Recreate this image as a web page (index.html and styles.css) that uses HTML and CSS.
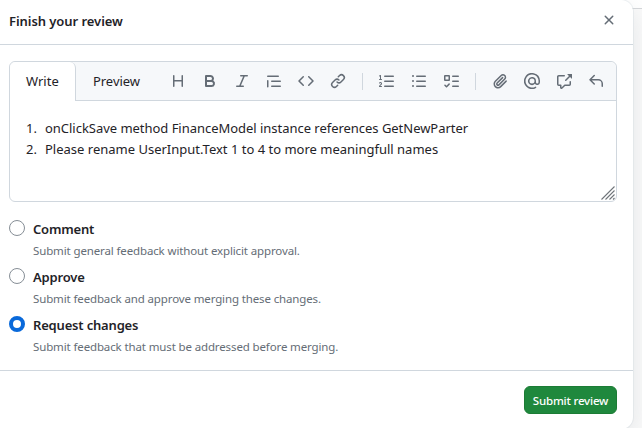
FILE: index.html
```html
<!DOCTYPE html>
<html lang="en">
<head>
<meta charset="utf-8">
<title>Finish your review</title>
<link rel="stylesheet" href="styles.css">
</head>
<body>
<div class="page-line"></div>
<form class="dialog">
  <header class="dialog-header">
    <h1 class="title"><span>Finish your review</span></h1>
    <button type="button" class="icon-btn close" aria-label="Close"><svg viewBox="0 0 16 16"><path d="M3.72 3.72a.75.75 0 0 1 1.06 0L8 6.94l3.22-3.22a.75.75 0 0 1 1.06 1.06L9.06 8l3.22 3.22a.75.75 0 0 1-1.06 1.06L8 9.06l-3.22 3.22a.75.75 0 0 1-1.06-1.06L6.94 8 3.72 4.78a.75.75 0 0 1 0-1.06Z"/></svg></button>
  </header>
  <section class="dialog-body">
    <div class="editor">
      <div class="tabs">
        <button type="button" class="tab active"><span>Write</span></button>
        <button type="button" class="tab preview"><span>Preview</span></button>
        <div class="toolbar">
          <button type="button" class="icon-btn" aria-label="Heading"><svg viewBox="0 0 16 16"><path d="M3.75 2a.75.75 0 0 1 .75.75V7h7V2.75a.75.75 0 0 1 1.5 0v10.5a.75.75 0 0 1-1.5 0V8.5h-7v4.75a.75.75 0 0 1-1.5 0V2.75A.75.75 0 0 1 3.75 2Z"/></svg></button>
          <button type="button" class="icon-btn" aria-label="Bold"><svg viewBox="0 0 16 16"><path d="M4 2h4.5a3.501 3.501 0 0 1 2.852 5.53A3.499 3.499 0 0 1 9.5 14H4a1 1 0 0 1-1-1V3a1 1 0 0 1 1-1Zm1 7v3h4.5a1.5 1.5 0 0 0 0-3Zm3.5-2a1.5 1.5 0 0 0 0-3H5v3Z"/></svg></button>
          <button type="button" class="icon-btn" aria-label="Italic"><svg viewBox="0 0 16 16"><path d="M6 2.75A.75.75 0 0 1 6.75 2h6.5a.75.75 0 0 1 0 1.5h-2.505l-3.858 9H9.25a.75.75 0 0 1 0 1.5h-6.5a.75.75 0 0 1 0-1.5h2.505l3.858-9H6.75A.75.75 0 0 1 6 2.75Z"/></svg></button>
          <button type="button" class="icon-btn" aria-label="Quote"><svg viewBox="0 0 16 16"><path d="M1.75 2.5h10.5a.75.75 0 0 1 0 1.5H1.75a.75.75 0 0 1 0-1.5Zm4 5h8.5a.75.75 0 0 1 0 1.5h-8.5a.75.75 0 0 1 0-1.5Zm0 5h8.5a.75.75 0 0 1 0 1.5h-8.5a.75.75 0 0 1 0-1.5ZM2.5 7.75v6a.75.75 0 0 1-1.5 0v-6a.75.75 0 0 1 1.5 0Z"/></svg></button>
          <button type="button" class="icon-btn" aria-label="Code"><svg viewBox="0 0 16 16"><path d="m11.28 3.22 4.25 4.25a.75.75 0 0 1 0 1.06l-4.25 4.25a.749.749 0 0 1-1.275-.326.749.749 0 0 1 .215-.734L13.94 8l-3.72-3.72a.749.749 0 0 1 .326-1.275.749.749 0 0 1 .734.215Zm-6.56 0a.751.751 0 0 1 1.042.018.751.751 0 0 1 .018 1.042L2.06 8l3.72 3.72a.749.749 0 0 1-.326 1.275.749.749 0 0 1-.734-.215L.47 8.53a.75.75 0 0 1 0-1.06Z"/></svg></button>
          <button type="button" class="icon-btn" aria-label="Link"><svg viewBox="0 0 16 16"><path d="m7.775 3.275 1.25-1.25a3.5 3.5 0 1 1 4.95 4.95l-2.5 2.5a3.5 3.5 0 0 1-4.95 0 .751.751 0 0 1 .018-1.042.751.751 0 0 1 1.042-.018 1.998 1.998 0 0 0 2.83 0l2.5-2.5a2.002 2.002 0 0 0-2.83-2.83l-1.25 1.25a.751.751 0 0 1-1.042-.018.751.751 0 0 1-.018-1.042Zm-4.69 9.64a1.998 1.998 0 0 0 2.83 0l1.25-1.25a.751.751 0 0 1 1.042.018.751.751 0 0 1 .018 1.042l-1.25 1.25a3.5 3.5 0 1 1-4.95-4.95l2.5-2.5a3.5 3.5 0 0 1 4.95 0 .751.751 0 0 1-.018 1.042.751.751 0 0 1-1.042.018 1.998 1.998 0 0 0-2.83 0l-2.5 2.5a1.998 1.998 0 0 0 0 2.83Z"/></svg></button>
          <i class="divider"></i>
          <button type="button" class="icon-btn" aria-label="Numbered list"><svg viewBox="0 0 16 16"><path d="M5.75 2.5h8.5a.75.75 0 0 1 0 1.5h-8.5a.75.75 0 0 1 0-1.5Zm0 5h8.5a.75.75 0 0 1 0 1.5h-8.5a.75.75 0 0 1 0-1.5Zm0 5h8.5a.75.75 0 0 1 0 1.5h-8.5a.75.75 0 0 1 0-1.5ZM.924 10.32a.5.5 0 0 1-.851-.525l.01-.018c.097-.144.215-.273.348-.384.228-.19.588-.392 1.068-.392.468 0 .858.181 1.126.484.259.294.377.673.377 1.038 0 .987-.686 1.495-1.156 1.845l-.047.035c-.303.225-.522.4-.654.597h1.357a.5.5 0 0 1 0 1H.5a.5.5 0 0 1-.5-.5c0-1.005.692-1.52 1.167-1.875l.035-.025c.531-.396.8-.625.8-1.078a.57.57 0 0 0-.128-.376C1.806 10.068 1.695 10 1.5 10a.658.658 0 0 0-.429.163.835.835 0 0 0-.144.153ZM2.003 2.5V6h.503a.5.5 0 0 1 0 1H.5a.5.5 0 0 1 0-1h.503V3.308l-.28.14a.5.5 0 0 1-.446-.895l1.003-.5a.5.5 0 0 1 .723.447Z"/></svg></button>
          <button type="button" class="icon-btn" aria-label="Bulleted list"><svg viewBox="0 0 16 16"><path d="M5.75 2.5h8.5a.75.75 0 0 1 0 1.5h-8.5a.75.75 0 0 1 0-1.5Zm0 5h8.5a.75.75 0 0 1 0 1.5h-8.5a.75.75 0 0 1 0-1.5Zm0 5h8.5a.75.75 0 0 1 0 1.5h-8.5a.75.75 0 0 1 0-1.5ZM2 14a1 1 0 1 1 0-2 1 1 0 0 1 0 2Zm1-6a1 1 0 1 1-2 0 1 1 0 0 1 2 0ZM2 4a1 1 0 1 1 0-2 1 1 0 0 1 0 2Z"/></svg></button>
          <button type="button" class="icon-btn" aria-label="Task list"><svg viewBox="0 0 16 16"><path d="M2 2h4a1 1 0 0 1 1 1v4a1 1 0 0 1-1 1H2a1 1 0 0 1-1-1V3a1 1 0 0 1 1-1Zm4.655 8.595a.75.75 0 0 1 0 1.06L4.03 14.28a.75.75 0 0 1-1.06 0l-1.5-1.5a.749.749 0 0 1 .326-1.275.749.749 0 0 1 .734.215l.97.97 2.095-2.095a.75.75 0 0 1 1.06 0ZM9.75 2.5h5.5a.75.75 0 0 1 0 1.5h-5.5a.75.75 0 0 1 0-1.5Zm0 5h5.5a.75.75 0 0 1 0 1.5h-5.5a.75.75 0 0 1 0-1.5Zm0 5h5.5a.75.75 0 0 1 0 1.5h-5.5a.75.75 0 0 1 0-1.5Zm-7.25-9v3h3v-3Z"/></svg></button>
          <i class="divider"></i>
          <button type="button" class="icon-btn" aria-label="Attach files"><svg viewBox="0 0 16 16"><path d="M12.212 3.02a1.753 1.753 0 0 0-2.478.003l-5.83 5.83a3.007 3.007 0 0 0-.88 2.127c0 .795.315 1.551.88 2.116.567.567 1.333.89 2.126.89.79 0 1.548-.321 2.116-.89l5.48-5.48a.75.75 0 0 1 1.061 1.06l-5.48 5.48a4.492 4.492 0 0 1-3.177 1.33c-1.2 0-2.345-.487-3.187-1.33a4.483 4.483 0 0 1-1.32-3.177c0-1.195.475-2.341 1.32-3.186l5.83-5.83a3.25 3.25 0 0 1 5.553 2.297c0 .863-.343 1.691-.953 2.301L7.439 12.39c-.375.377-.884.59-1.416.593a1.998 1.998 0 0 1-1.412-.593 1.992 1.992 0 0 1 0-2.828l5.48-5.48a.751.751 0 0 1 1.042.018.751.751 0 0 1 .018 1.042l-5.48 5.48a.492.492 0 0 0 0 .707.499.499 0 0 0 .352.154.51.51 0 0 0 .356-.154l5.833-5.827a1.755 1.755 0 0 0 0-2.481Z"/></svg></button>
          <button type="button" class="icon-btn" aria-label="Mention"><svg viewBox="0 0 16 16"><path d="M4.75 2.37a6.501 6.501 0 0 0 6.5 11.26.75.75 0 0 1 .75 1.298A7.999 7.999 0 0 1 .989 4.148 8 8 0 0 1 16 7.75v1.5a2.75 2.75 0 0 1-5.072 1.475 3.999 3.999 0 0 1-6.65-4.19A4 4 0 0 1 12 8v1.25a1.25 1.25 0 0 0 2.5 0V7.867a6.5 6.5 0 0 0-9.75-5.496ZM10.5 8a2.5 2.5 0 1 0-5 0 2.5 2.5 0 0 0 5 0Z"/></svg></button>
          <button type="button" class="icon-btn" aria-label="Reference"><svg viewBox="0 0 16 16"><path d="M2.75 3.5a.25.25 0 0 0-.25.25v7.5c0 .138.112.25.25.25h2a.75.75 0 0 1 .75.75v2.19l2.72-2.72a.749.749 0 0 1 .53-.22h4.5a.25.25 0 0 0 .25-.25v-2.5a.75.75 0 0 1 1.5 0v2.5A1.75 1.75 0 0 1 13.25 13H9.06l-2.573 2.573A1.458 1.458 0 0 1 4 14.543V13H2.75A1.75 1.75 0 0 1 1 11.25v-7.5C1 2.784 1.784 2 2.75 2h5.5a.75.75 0 0 1 0 1.5ZM16 1.25v4.146a.25.25 0 0 1-.427.177L14.03 4.03l-3.75 3.75a.749.749 0 0 1-1.275-.326.749.749 0 0 1 .215-.734l3.75-3.75-1.543-1.543A.25.25 0 0 1 11.604 1h4.146a.25.25 0 0 1 .25.25Z"/></svg></button>
          <button type="button" class="icon-btn" aria-label="Saved replies"><svg viewBox="0 0 16 16"><path d="M6.78 1.97a.75.75 0 0 1 0 1.06L3.81 6h6.44A4.75 4.75 0 0 1 15 10.75v2.5a.75.75 0 0 1-1.5 0v-2.5a3.25 3.25 0 0 0-3.25-3.25H3.81l2.97 2.97a.749.749 0 0 1-.326 1.275.749.749 0 0 1-.734-.215L1.47 7.28a.75.75 0 0 1 0-1.06l4.25-4.25a.75.75 0 0 1 1.06 0Z"/></svg></button>
        </div>
      </div>
      <div class="text">
        <div class="line first"><span class="num">1.</span><span>onClickSave method FinanceModel instance references GetNewParter</span></div>
        <div class="line"><span class="num">2.</span><span>Please rename UserInput.Text 1 to 4 to more meaningfull names</span></div>
        <svg class="grip" viewBox="0 0 14 14"><path d="M.5 13.5l13-13M4.5 13.5l9-9M8.5 13.5l5-5M12 13.5l1.5-1.5"/></svg>
      </div>
    </div>
    <div class="options">
      <label class="option"><i class="radio"></i><span class="name">Comment</span><span class="desc">Submit general feedback without explicit approval.</span></label>
      <label class="option"><i class="radio"></i><span class="name">Approve</span><span class="desc">Submit feedback and approve merging these changes.</span></label>
      <label class="option"><i class="radio checked"></i><span class="name">Request changes</span><span class="desc">Submit feedback that must be addressed before merging.</span></label>
    </div>
  </section>
  <footer class="dialog-footer"><button type="button" class="submit"><span>Submit review</span></button></footer>
</form>
</body>
</html>
```
FILE: styles.css
```css
* { box-sizing: border-box; }
body {
  margin: 0;
  height: 428px;
  overflow: hidden;
  background: #fafafa;
  color: #1f2328;
  font: 13px/21px "Noto Sans", "Open Sans", sans-serif;
}
button { margin: 0; padding: 0; border: 0; background: none; font: inherit; color: inherit; }
svg { display: block; }
.page-line {
  position: absolute;
  top: 0;
  right: 0;
  width: 30px;
  height: 9px;
  background: #fff;
  border-bottom: 1px solid #d5d7da;
}
.dialog {
  position: relative;
  width: 633px;
  height: 429px;
  display: flex;
  flex-direction: column;
  background: #fff;
  border-radius: 0 12px 12px 0;
  box-shadow: 0 0 0 1px #d0d7de55, 0 8px 24px #8c959f33;
}
.dialog-header {
  height: 45px;
  flex: none;
  display: flex;
  justify-content: space-between;
  align-items: center;
  padding: 0 8px 4px 9px;
  border-bottom: 1px solid #d0d7de;
}
.title { margin: 0; padding-top: 2px; font-size: 13px; font-weight: 600; letter-spacing: -.06px; }
.icon-btn { width: 32px; height: 32px; flex: none; display: grid; place-items: center; }
.icon-btn svg { width: 16px; height: 16px; fill: #656d76; }
.dialog-body { flex: 1; padding: 16px 16px 0 9px; }
.editor { height: 141px; border: 1px solid #d0d7de; border-radius: 6px; }
.tabs {
  height: 39px;
  display: flex;
  background: #f6f8fa;
  border-bottom: 1px solid #d0d7de;
  border-radius: 6px 6px 0 0;
}
.tab { padding: 0 16px; height: 39px; flex: none; text-align: left; white-space: nowrap; }
.tab.active {
  width: 66px;
  background: #fff;
  border-right: 1px solid #d0d7de;
  border-radius: 6px 6px 0 0;
}
.tab.preview { padding-left: 17px; letter-spacing: -.05px; }
.toolbar { flex: 1; display: flex; align-items: center; justify-content: flex-end; padding-right: 4px; }
.divider { width: 1px; height: 17px; margin: 0 8px; background: #d0d7de; }
.text { position: relative; height: 100px; padding: 17px 16px; }
.line { display: flex; height: 21px; white-space: nowrap; }
.line.first { letter-spacing: -.03px; }
.num { width: 19px; }
.grip {
  position: absolute;
  right: 1px;
  bottom: 1px;
  width: 14px;
  height: 14px;
  fill: none;
  stroke: #70757a;
  stroke-width: 1.1;
}
.options { padding-top: 18px; }
.option { display: grid; grid-template-columns: 24px 1fr; grid-template-rows: 20px 28px; white-space: nowrap; }
.radio { width: 16px; height: 16px; border: 1px solid #868e96; border-radius: 50%; }
.radio.checked { border: 4.5px solid #0969da; }
.name { font-weight: 600; line-height: 19px; letter-spacing: -.18px; }
.desc { grid-column: 2; color: #656d76; font-size: 11.5px; line-height: 22px; letter-spacing: -.13px; }
.dialog-footer {
  height: 59px;
  flex: none;
  display: flex;
  justify-content: flex-end;
  padding: 15px 16px 0 0;
  border-top: 1px solid #d0d7de;
}
.submit {
  width: 93px;
  height: 28px;
  border: 1px solid #1c7c35;
  border-radius: 6px;
  background: #1f883d;
  color: #fff;
  font-size: 11.5px;
  font-weight: 500;
  letter-spacing: -.2px;
  white-space: nowrap;
}
```
